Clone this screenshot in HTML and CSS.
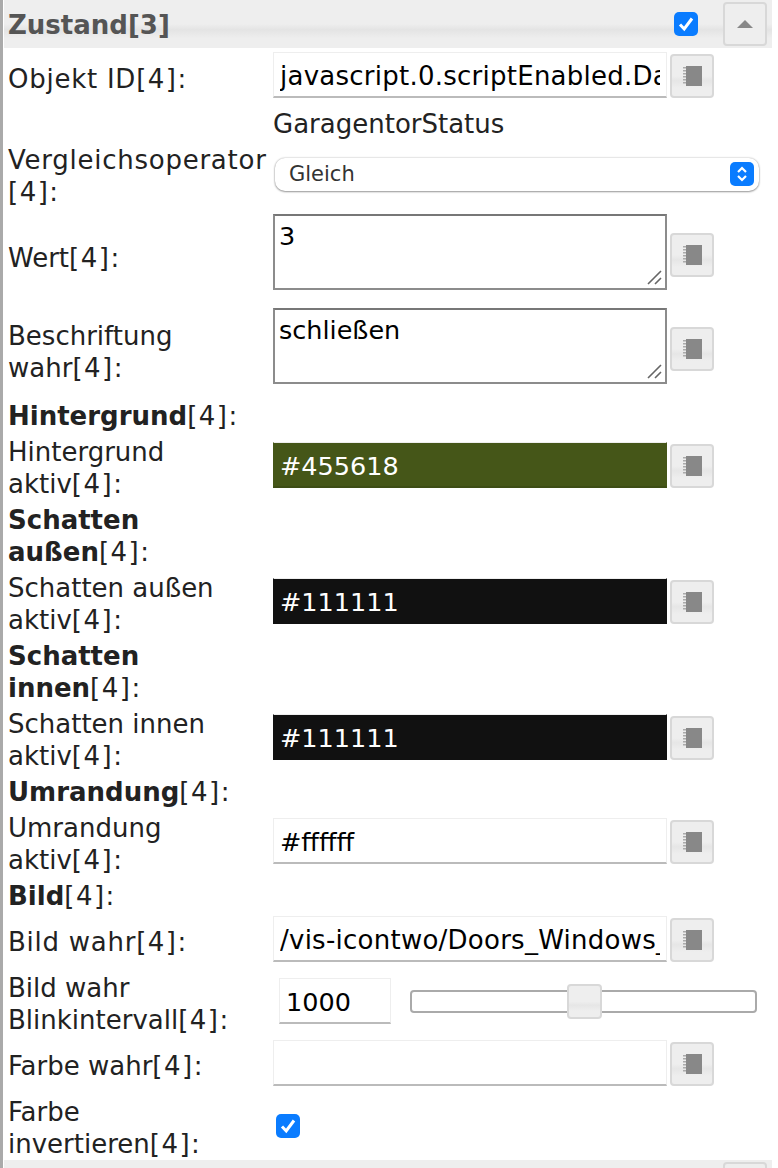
FILE: index.html
```html
<!DOCTYPE html>
<html lang="de">
<head>
<meta charset="UTF-8" />
<title>Zustand</title>
<link rel="stylesheet" href="styles.css">
</head>
<body>

<svg class="defs" width="0" height="0">
  <symbol id="book" viewBox="0 0 19 20">
    <rect x="3" y="0" width="16" height="20" fill="#888" />
    <path d="M0 1h3v1.5H0zM0 4h3v1.5H0zM0 7h3v1.5H0zM0 10h3v1.5H0zM0 13h3v1.5H0zM0 16h3v1.5H0z" fill="#aaa" />
  </symbol>
  <symbol id="check" viewBox="0 0 24 24">
    <rect width="24" height="24" rx="5" fill="#0a7cff" />
    <path d="M6 12.5l4.2 4.5L18 6.5" fill="none" stroke="#fff" stroke-width="3" />
  </symbol>
  <symbol id="grip" viewBox="0 0 16 16">
    <path d="M1 14L14 1M8 14L14 8" fill="none" stroke="#666" stroke-width="1.6" />
  </symbol>
</svg>

<div class="panel">
  <div class="head">
    <h3>Zustand[3]</h3>
    <svg class="check head-check"><use href="#check" /></svg>
    <button class="btn-up" type="button"><span class="arrow"></span></button>
  </div>

  <div class="row row-first">
    <label class="wide">Objekt ID<span class="idx">[4]:</span></label>
    <div class="val"><input class="txt txt-long" type="text" value="javascript.0.scriptEnabled.Daten.GaragentorStatus" /><button class="btn" type="button"><svg><use href="#book" /></svg></button></div>
  </div>
  <div class="row">
    <span></span>
    <div class="name">GaragentorStatus</div>
  </div>
  <div class="row">
    <label class="wide">Vergleichsoperator<br /><span class="idx">[4]:</span></label>
    <div class="val sel-wrap">
      <select class="sel"><option>Gleich</option></select>
      <svg class="sel-icon" viewBox="0 0 24 24">
        <rect width="24" height="24" rx="5" fill="#0a7cff" />
        <path d="M8 10l4-4 4 4M8 14l4 4 4-4" fill="none" stroke="#fff" stroke-width="2.2" />
      </svg>
    </div>
  </div>
  <div class="row row-wert">
    <label>Wert<span class="idx">[4]:</span></label>
    <div class="val val-center"><div class="area-wrap"><textarea class="area">3</textarea><svg class="grip"><use href="#grip" /></svg></div><button class="btn" type="button"><svg><use href="#book" /></svg></button></div>
  </div>
  <div class="row row-text">
    <label>Beschriftung<br />wahr<span class="idx">[4]:</span></label>
    <div class="val val-center"><div class="area-wrap"><textarea class="area">schließen</textarea><svg class="grip"><use href="#grip" /></svg></div><button class="btn" type="button"><svg><use href="#book" /></svg></button></div>
  </div>

  <div class="row"><label><b>Hintergrund</b><span class="idx">[4]:</span></label></div>
  <div class="row">
    <label>Hintergrund<br />aktiv<span class="idx">[4]:</span></label>
    <div class="val"><input class="txt col-olive" type="text" value="#455618" /><button class="btn" type="button"><svg><use href="#book" /></svg></button></div>
  </div>
  <div class="row"><label><b>Schatten<br />außen</b><span class="idx">[4]:</span></label></div>
  <div class="row">
    <label>Schatten außen<br />aktiv<span class="idx">[4]:</span></label>
    <div class="val"><input class="txt col-dark" type="text" value="#111111" /><button class="btn" type="button"><svg><use href="#book" /></svg></button></div>
  </div>
  <div class="row"><label><b>Schatten<br />innen</b><span class="idx">[4]:</span></label></div>
  <div class="row">
    <label>Schatten innen<br />aktiv<span class="idx">[4]:</span></label>
    <div class="val"><input class="txt col-dark" type="text" value="#111111" /><button class="btn" type="button"><svg><use href="#book" /></svg></button></div>
  </div>
  <div class="row"><label><b>Umrandung</b><span class="idx">[4]:</span></label></div>
  <div class="row">
    <label>Umrandung<br />aktiv<span class="idx">[4]:</span></label>
    <div class="val"><input class="txt" type="text" value="#ffffff" /><button class="btn" type="button"><svg><use href="#book" /></svg></button></div>
  </div>
  <div class="row"><label><b>Bild</b><span class="idx">[4]:</span></label></div>
  <div class="row row-single">
    <label class="wide">Bild wahr<span class="idx">[4]:</span></label>
    <div class="val"><input class="txt txt-long" type="text" value="/vis-icontwo/Doors_Windows_Garage.png" /><button class="btn" type="button"><svg><use href="#book" /></svg></button></div>
  </div>
  <div class="row">
    <label>Bild wahr<br />Blinkintervall<span class="idx">[4]:</span></label>
    <div class="val val-center">
      <input class="txt num" type="text" value="1000" />
      <div class="slider"><span class="handle"></span></div>
    </div>
  </div>
  <div class="row row-single">
    <label>Farbe wahr<span class="idx">[4]:</span></label>
    <div class="val"><input class="txt" type="text" value="" /><button class="btn" type="button"><svg><use href="#book" /></svg></button></div>
  </div>
  <div class="row">
    <label>Farbe<br />invertieren<span class="idx">[4]:</span></label>
    <div class="val val-check"><svg class="check row-check"><use href="#check" /></svg></div>
  </div>

  <div class="head head-next">
    <button class="btn-up" type="button"></button>
  </div>
</div>

</body>
</html>
```

FILE: styles.css
```css
html, body {
  margin: 0;
  padding: 0;
  background: #fff;
}
body {
  height: 1168px;
  overflow: hidden;
  font-family: "DejaVu Sans", sans-serif;
  font-size: 26px;
  line-height: 32px;
  color: #222;
}
.defs {
  position: absolute;
}
.panel {
  width: 768px;
  padding-left: 1px;
  border-left: 3px solid #aaa;
  display: flex;
  flex-direction: column;
  gap: 4px;
}
.head {
  height: 48px;
  display: flex;
  align-items: center;
  background: linear-gradient(#eee 0%, #eee 50%, #e4e4e4 62%, #eee 80%);
}
.head h3 {
  margin: 2px 0 0 4px;
  font-size: 26px;
  color: #555;
  flex: 1;
}
.head-check {
  margin-right: 25px;
}
.btn-up {
  width: 44px;
  height: 44px;
  margin: 0 5px 0 0;
  padding: 0;
  background: #eee;
  border: 2px solid #d8d8d8;
  border-radius: 4px;
  display: flex;
  align-items: center;
  justify-content: center;
}
.arrow {
  border-left: 8px solid transparent;
  border-right: 8px solid transparent;
  border-bottom: 8px solid #888;
}
.head-next {
  margin-top: -4px;
  align-items: flex-start;
  justify-content: flex-end;
}
.head-next .btn-up {
  margin-top: 2px;
}
.check {
  width: 24px;
  height: 24px;
  flex: none;
}
.row {
  display: grid;
  grid-template-columns: 269px 1fr;
  align-items: center;
  min-height: 32px;
}
.row label {
  padding-left: 4px;
  white-space: nowrap;
}
.row label.wide {
  letter-spacing: 0.75px;
}
.idx {
  letter-spacing: 1.5px;
}
.row-first {
  height: 52px;
}
.row-first .val {
  margin-bottom: 8px;
}
.row-wert {
  height: 92px;
}
.row-text {
  height: 88px;
}
.row-wert .val, .row-text .val {
  margin-bottom: 12px;
}
.row-single {
  height: 52px;
}
.val {
  display: flex;
  align-items: flex-end;
  gap: 3px;
  margin-bottom: 6px;
  min-width: 0;
}
.val-center {
  align-items: center;
}
.val-check {
  margin-bottom: 4px;
}
.txt {
  width: 394px;
  height: 46px;
  box-sizing: border-box;
  padding: 2px 6px 0;
  font-family: inherit;
  font-size: 25.5px;
  color: #000;
  background: #fff;
  border: 1px solid #eee;
  border-bottom: 2px solid #bbb;
  outline: none;
}
.txt-long {
  font-size: 26px;
  letter-spacing: 0.25px;
}
.col-olive {
  background: #455618;
  color: #fff;
  border-color: #eee #455618 #3d4d15;
}
.col-dark {
  background: #111;
  color: #fff;
  border-color: #eee #111 #111;
}
.btn {
  width: 44px;
  height: 44px;
  flex: none;
  padding: 0;
  background: linear-gradient(#eee 0%, #eee 50%, #e6e6e6 62%, #eee 80%);
  border: 2px solid #d8d8d8;
  border-radius: 4px;
  display: flex;
  align-items: center;
  justify-content: center;
}
.btn svg {
  width: 19px;
  height: 20px;
  filter: blur(0.7px);
}
.area-wrap {
  position: relative;
  display: flex;
}
.area-wrap + .btn {
  margin-top: 6px;
}
.area {
  width: 394px;
  height: 76px;
  box-sizing: border-box;
  margin: 0;
  padding: 4px 4px;
  font-family: inherit;
  font-size: 25.5px;
  line-height: 32px;
  color: #000;
  border: 2px solid #8c8c8c;
  border-top-color: #777;
  outline: none;
  resize: none;
}
.grip {
  position: absolute;
  right: 4px;
  bottom: 4px;
  width: 16px;
  height: 16px;
}
.sel-wrap {
  position: relative;
  margin-left: 2px;
  margin-bottom: 4px;
  width: 484px;
}
.sel {
  appearance: none;
  width: 100%;
  height: 33px;
  box-sizing: border-box;
  padding: 0 14px;
  font-family: inherit;
  font-size: 21px;
  color: #333;
  background: #fff;
  border: none;
  border-radius: 10px;
  box-shadow: 0 0 2px rgba(0, 0, 0, 0.3), 0 1px 2px rgba(0, 0, 0, 0.35);
  outline: none;
}
.sel-icon {
  position: absolute;
  right: 5px;
  top: 4px;
  width: 24px;
  height: 24px;
}
.num {
  width: 112px;
  margin-left: 6px;
}
.slider {
  position: relative;
  width: 347px;
  height: 23px;
  box-sizing: border-box;
  margin-left: 16px;
  border: 2px solid #aaa;
  border-radius: 4px;
  background: #fff;
}
.handle {
  position: absolute;
  left: 155px;
  top: -8px;
  width: 35px;
  height: 35px;
  box-sizing: border-box;
  background: linear-gradient(#eee 0%, #eee 50%, #e6e6e6 62%, #eee 80%);
  border: 2px solid #d8d8d8;
  border-radius: 4px;
}
.row-check {
  margin-left: 3px;
}
```
